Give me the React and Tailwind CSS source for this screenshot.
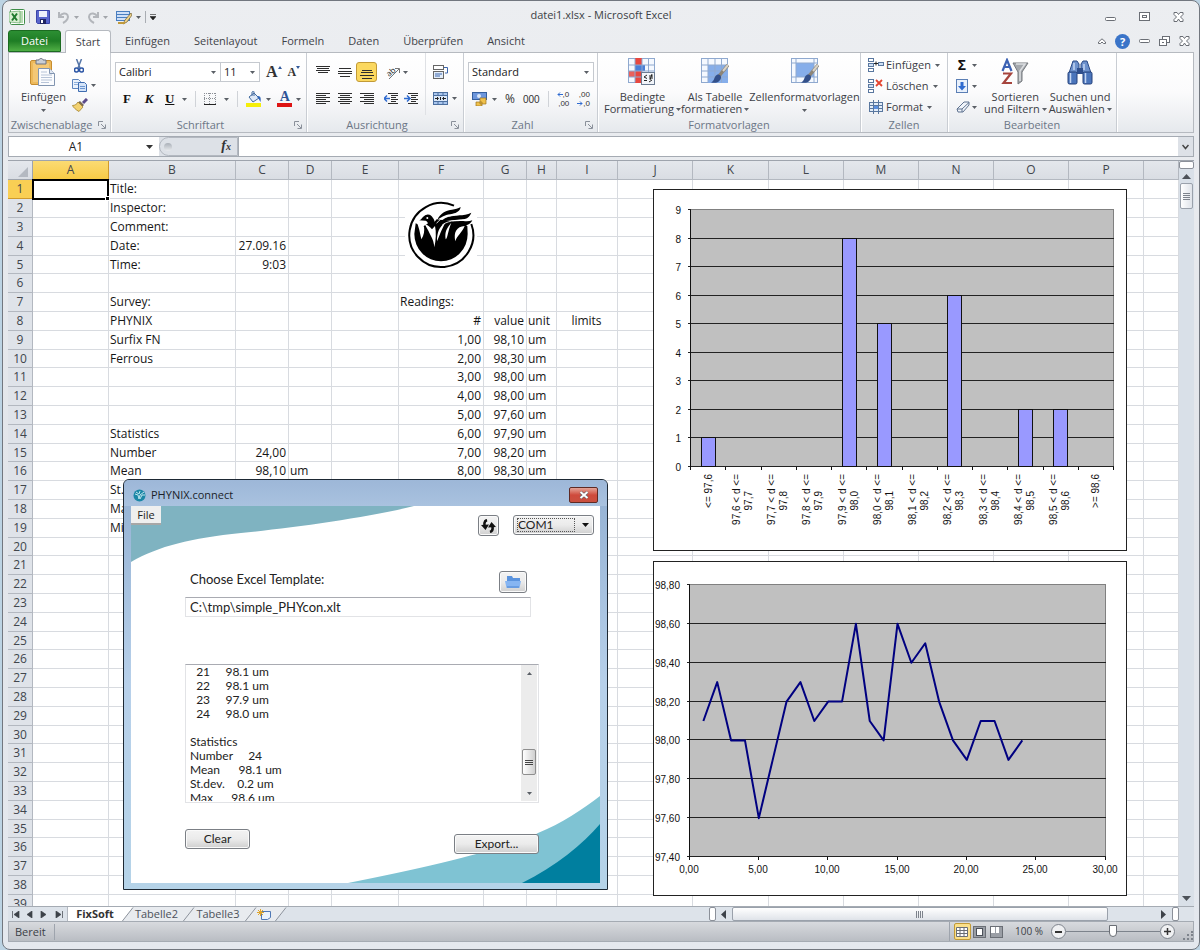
import React, { useState } from "react";

const COLUMNS = [
  { name: "A", width: "w-[76px]" },
  { name: "B", width: "w-[127px]" },
  { name: "C", width: "w-[53px]" },
  { name: "D", width: "w-[43px]" },
  { name: "E", width: "w-[67px]" },
  { name: "F", width: "w-[85px]" },
  { name: "G", width: "w-[43px]" },
  { name: "H", width: "w-[30px]" },
  { name: "I", width: "w-[61px]" },
  { name: "J", width: "w-[75px]" },
  { name: "K", width: "w-[76px]" },
  { name: "L", width: "w-[75px]" },
  { name: "M", width: "w-[75px]" },
  { name: "N", width: "w-[75px]" },
  { name: "O", width: "w-[75px]" },
  { name: "P", width: "w-[75px]" },
  { name: "", width: "" },
];

const CELLS = {
  B1: "Title:",
  B2: "Inspector:",
  B3: "Comment:",
  B4: "Date:",
  C4: "27.09.16",
  B5: "Time:",
  C5: "9:03",
  B7: "Survey:",
  F7: "Readings:",
  B8: "PHYNIX",
  F8: "#",
  G8: "value",
  H8: "unit",
  I8: "limits",
  B9: "Surfix FN",
  B10: "Ferrous",
  B14: "Statistics",
  B15: "Number",
  C15: "24,00",
  B16: "Mean",
  C16: "98,10",
  D16: "um",
  B17: "St.dev.",
  B18: "Max",
  B19: "Min",
};

const READINGS = [
  98.1, 98.3, 98.0, 98.0, 97.6, 97.9, 98.2, 98.3, 98.1, 98.2, 98.2, 98.6,
  98.1, 98.0, 98.6, 98.4, 98.5, 98.2, 98.0, 97.9, 98.1, 98.1, 97.9, 98.0,
];

const comma = (n) => n.toFixed(2).replace(".", ",");

READINGS.slice(0, 8).forEach((value, i) => {
  CELLS[`F${i + 9}`] = comma(i + 1);
  CELLS[`G${i + 9}`] = comma(value);
  CELLS[`H${i + 9}`] = "um";
});

const HISTOGRAM = [
  { label: ["<= 97,6"], count: 1 },
  { label: ["97,6 < d <=", "97,7"], count: 0 },
  { label: ["97,7 < d <=", "97,8"], count: 0 },
  { label: ["97,8 < d <=", "97,9"], count: 0 },
  { label: ["97,9 < d <=", "98,0"], count: 8 },
  { label: ["98,0 < d <=", "98,1"], count: 5 },
  { label: ["98,1 < d <=", "98,2"], count: 0 },
  { label: ["98,2 < d <=", "98,3"], count: 6 },
  { label: ["98,3 < d <=", "98,4"], count: 0 },
  { label: ["98,4 < d <=", "98,5"], count: 2 },
  { label: ["98,5 < d <=", "98,6"], count: 2 },
  { label: [">= 98,6"], count: 0 },
];

const LOG = [
  "  21     98.1 um",
  "  22     98.1 um",
  "  23     97.9 um",
  "  24     98.0 um",
  "",
  "Statistics",
  "Number     24",
  "Mean      98.1 um",
  "St.dev.    0.2 um",
  "Max      98.6 um",
].join("\n");

/* ---------- small helpers ---------- */

function Caret({ className = "" }) {
  return (
    <svg className={`h-[3px] w-[5px] shrink-0 ${className}`} viewBox="0 0 5 3">
      <path d="M0 0h5L2.5 3z" fill="#5a5f66" />
    </svg>
  );
}

function Svg({ w, h, children, className = "" }) {
  return (
    <svg width={w} height={h} viewBox={`0 0 ${w} ${h}`} className={`shrink-0 ${className}`} fill="none">
      {children}
    </svg>
  );
}

function IconButton({ label, children, className = "" }) {
  return (
    <button aria-label={label} title={label} className={`flex shrink-0 items-center justify-center gap-1 ${className}`}>
      {children}
    </button>
  );
}

function Combo({ label, value, className }) {
  return (
    <span className={`relative flex h-5 items-center border border-[#c5c9cf] bg-white ${className}`}>
      <select aria-label={label} className="h-full w-full appearance-none bg-transparent pl-[3px] text-[11px] text-[#222] outline-none">
        <option>{value}</option>
      </select>
      <Caret className="pointer-events-none absolute right-1" />
    </span>
  );
}

function Group({ title, className = "", launcher, children }) {
  return (
    <section className={`flex shrink-0 flex-col border-r border-[#c9cdd3] shadow-[1px_0_0_#fff] ${className}`}>
      <div className="flex-1">{children}</div>
      <div className={`relative flex h-[15px] items-center justify-center text-[11px] leading-[15px] text-[#6c7686] ${launcher ? "pr-4" : ""}`}>
        {title}
        {launcher && (
          <button aria-label={`${title} Optionen`} className="absolute right-1 top-1">
            <Svg w={8} h={8}>
              <path d="M.5 5V.5H5M3 3l4 4M7.5 3.5v4h-4" stroke="#8a909a" />
            </Svg>
          </button>
        )}
      </div>
    </section>
  );
}

/* ---------- icons ---------- */

const ExcelIcon = () => (
  <Svg w={16} h={16}>
    <rect x="1.5" y=".5" width="14" height="15" rx="1" fill="#fff" stroke="#3f8d48" />
    <rect x="10" y="2" width="4" height="12" fill="#b9dcb4" />
    <path d="M0 3l11-1v12L0 13z" fill="#d9efd2" stroke="#4f9a55" strokeWidth=".6" />
    <path d="M3 4.5l5 7M8 4.5l-5 7" stroke="#1f7a2e" strokeWidth="2" />
  </Svg>
);

const SaveIcon = () => (
  <Svg w={14} h={14}>
    <path d="M.5.5h13v13h-12l-1-1z" fill="#5a66cc" stroke="#3a44a8" />
    <rect x="3" y="1" width="8" height="6" fill="#eef1fb" />
    <rect x="4" y="9" width="6" height="5" fill="#1e2360" />
    <rect x="5" y="10" width="2" height="3" fill="#fff" />
  </Svg>
);

const UndoIcon = ({ flip }) => (
  <Svg w={12} h={13} className={flip ? "-scale-x-100" : ""}>
    <path d="M1 1v5h5M1.5 5.5C4 2 8 1.5 9.5 4c1.5 2.5-.5 6-4.5 8" stroke="#b3b6bb" strokeWidth="2" />
  </Svg>
);

const EditIcon = () => (
  <Svg w={16} h={15}>
    <rect x=".5" y="1.5" width="13" height="9" fill="#cfe0f8" stroke="#4a7fc0" />
    <path d="M.5 4.5h13M.5 7.5h13" stroke="#4a7fc0" />
    <path d="M15 3l-6 7-2 4 4-2 5-7z" fill="#f0d48a" stroke="#6e5a2a" strokeWidth=".7" />
    <path d="M2 13h7" stroke="#c09a3c" strokeWidth="2" />
  </Svg>
);

const PasteIcon = () => (
  <Svg w={26} h={28}>
    <rect x=".5" y="2.5" width="21" height="24" rx="1.5" fill="#edb95a" stroke="#c68d31" />
    <rect x="3" y="5" width="16" height="19" fill="#f4c876" />
    <path d="M6 2h3c0-2 4-2 4 0h3v4H6z" fill="#c9ced6" stroke="#6c7380" />
    <path d="M8.5 10.5h11l5 5v12h-16z" fill="#fbfcfe" stroke="#8295b0" />
    <path d="M19.5 10.5v5h5" fill="#dfe6f1" stroke="#8295b0" />
    <path d="M11 14h6M11 17h11M11 19.5h11M11 22h11M11 24.5h8" stroke="#b7c4d8" />
  </Svg>
);

const CutIcon = () => (
  <Svg w={10} h={14}>
    <path d="M2.5 0l3.5 9M7.5 0L4 9" stroke="#5676a8" strokeWidth="1.5" />
    <circle cx="2.5" cy="11" r="2" stroke="#2b55a5" strokeWidth="1.5" />
    <circle cx="7.5" cy="11" r="2" stroke="#2b55a5" strokeWidth="1.5" />
  </Svg>
);

const CopyIcon = () => (
  <Svg w={15} h={13}>
    <path d="M.5.5h6l2 2v7h-8z" fill="#eaf2fc" stroke="#5d84bd" />
    <path d="M2 3.5h4M2 5.5h4" stroke="#8fb0dc" />
    <path d="M6.5 3.5h6l2 2v7h-8z" fill="#d5e4f8" stroke="#3e6cb0" />
    <path d="M8 7.5h5M8 9.5h5" stroke="#6d96d0" />
  </Svg>
);

const BrushIcon = () => (
  <Svg w={16} h={14}>
    <path d="M15 1l-4 4" stroke="#5a4a8a" strokeWidth="3" />
    <path d="M8 3l4 4-2 2-5-4z" fill="#7b6a56" />
    <path d="M6 4l5 5-4 4.5C4 12 1 9 .5 7.5 3 7.5 5 6 6 4z" fill="#f3d271" stroke="#a3832c" strokeWidth=".8" />
  </Svg>
);

/* horizontal strokes given as [x1, x2, y] */
const Lines = ({ w = 14, h = 12, rows, children }) => (
  <Svg w={w} h={h}>
    {rows.map(([a, b, y], i) => (
      <path key={i} d={`M${a} ${y + 0.5}H${b}`} stroke="#2e2e2e" />
    ))}
    {children}
  </Svg>
);

const GridIcon = () => (
  <Svg w={12} h={12}>
    <path d="M.5 0v11M5.5 0v11M11.5 0v11M0 .5h12M0 5.5h12" stroke="#8b8f96" strokeDasharray="1 1" />
    <path d="M0 11.5h12" stroke="#222" />
  </Svg>
);

const FillIcon = () => (
  <Svg w={16} h={16}>
    <path d="M3 6l5-4 5 5-6 4z" fill="#dfe9f7" stroke="#426a9f" />
    <path d="M6 5V1c1-1 2-1 2 0v4" stroke="#426a9f" />
    <path d="M12 5c3 0 3 3 2.5 6C13 9 13 7 11 6z" fill="#2f64b8" />
    <rect x="0" y="12" width="15" height="4" fill="#f5ee0a" />
  </Svg>
);

const SheetIcon = ({ kind }) => (
  <Svg w={28} h={28}>
    <rect x=".5" y=".5" width="26" height="24" fill="#f5f9ff" stroke="#8fa9cf" />
    {kind === "cond" && (
      <>
        <rect x="7" y="0" width="7" height="25" fill="#e8473f" />
        <rect x="7" y="7" width="10" height="6" fill="#4a7fd8" />
        <rect x="1" y="13" width="13" height="6" fill="#e8473f" opacity=".85" />
      </>
    )}
    {kind === "table" && <rect x="7" y="7" width="20" height="18" fill="#86aeea" />}
    {kind !== "style" && <path d="M.5 7h26M.5 13h26M.5 19h26M7 .5v24M14 .5v24M20.5 .5v24" stroke="#8fa9cf" />}
    {kind === "style" && (
      <>
        <rect x="5" y="5" width="18" height="14" fill="#86aeea" />
        <path d="M.5 5h26M.5 19h26M5 .5v24M23 .5v24" stroke="#8fa9cf" />
      </>
    )}
    {kind === "cond" ? (
      <>
        <rect x="13.5" y="14.5" width="13" height="12" fill="#f2f5fa" stroke="#6c7c92" />
        <path d="M19 17l-3 2 3 1.5M16 22.5h3M21 18h4M21 20h4M24 16l-2 6M21 24l3-2" stroke="#222" />
      </>
    ) : (
      <>
        <path d="M27 7L18 18" stroke="#8d8577" strokeWidth="3.5" />
        <path d="M27 7l-5 6" stroke="#d8d3c8" strokeWidth="2" />
        <path d="M19 17c2 2 1 5-2 7-2 1-5 1-7 .5 3-1.5 3-4 4.5-6.5 1-1.5 3-2 4.5-1z" fill="#33508a" />
      </>
    )}
  </Svg>
);

const RowsIcon = ({ kind }) => (
  <Svg w={16} h={14}>
    {kind === "format" ? (
      <>
        <rect x="1.5" y="2.5" width="13" height="9" fill="#e3edf9" stroke="#59779f" />
        <path d="M1 5.5h14M1 8.5h14M5.5 0v14M10.5 0v14" stroke="#59779f" />
        <rect x="6" y="6" width="4" height="3" fill="#5a8fe0" />
      </>
    ) : (
      <>
        <rect x=".5" y=".5" width="5" height="3" fill="#fff" stroke="#59779f" />
        <rect x=".5" y="5.5" width="5" height="3" fill="#cfe0f5" stroke="#59779f" />
        <rect x=".5" y="10.5" width="5" height="3" fill="#fff" stroke="#59779f" />
        {kind === "insert" ? (
          <>
            <path d="M6 5.5h4M8 3.5v4" stroke="#222" />
            <rect x="10.5" y="4.5" width="5" height="3" fill="#cfe0f5" stroke="#59779f" />
          </>
        ) : (
          <path d="M8 1l6 6M14 1L8 7" stroke="#e4442f" strokeWidth="1.8" />
        )}
      </>
    )}
  </Svg>
);

const DownBoxIcon = () => (
  <Svg w={12} h={14}>
    <rect x=".5" y=".5" width="11" height="13" fill="#e9f1fc" stroke="#5b7fb5" />
    <path d="M4.5 3h3v4H10l-4 4.5L2 7h2.5z" fill="#2f6bd0" />
  </Svg>
);

const EraserIcon = () => (
  <Svg w={14} h={12}>
    <path d="M1 8l7-7h5v3l-6 7H2z" fill="#f0f4fa" stroke="#5f7390" />
    <path d="M1 8h5l7-6.5M6 8v3" stroke="#5f7390" />
  </Svg>
);

const SortIcon = () => (
  <Svg w={28} h={28}>
    <path d="M12 5h15l-6 9v9l-4 3V14z" fill="#a4a8ad" stroke="#74787d" />
    <path d="M15 6h9l-5 7v10" stroke="#dcdee1" strokeWidth="1.5" />
    <path d="M1.5 13L6 2l4.5 11M3 9h6" stroke="#3c62b4" strokeWidth="2.2" />
    <path d="M2 15.5h8L2.5 25H11" stroke="#a6443d" strokeWidth="2.2" />
  </Svg>
);

const BinocularsIcon = () => (
  <Svg w={26} h={25}>
    <path d="M6 1h4l2 3v9H2L5 4zM16 1h4l1 3 3 9H14V4z" fill="#6d91cc" stroke="#2b4a85" />
    <rect x="1" y="12" width="9" height="12" rx="1.5" fill="#4b75bb" stroke="#24417a" />
    <rect x="16" y="12" width="9" height="12" rx="1.5" fill="#4b75bb" stroke="#24417a" />
    <rect x="10" y="8" width="6" height="6" fill="#2f4f8d" />
    <path d="M3.5 13v10M18.5 13v10M7 3v7M17 4v6" stroke="#c4d6f2" strokeWidth="1.5" />
  </Svg>
);

const DecimalArrow = ({ flip }) => (
  <Svg w={6} h={5} className={flip ? "-scale-x-100" : ""}>
    <path d="M6 2.5H1M3 .5l-2 2 2 2" stroke="#2f6bd0" />
  </Svg>
);

function PhoenixLogo() {
  return (
    <svg className="h-[70px] w-[72px]" viewBox="75 120 216 210">
      <rect x="75" y="120" width="216" height="210" fill="#fff" />
      <path d="M222 137A96 96 0 1 0 274 192" fill="none" stroke="#000" strokeWidth="6" />
      <path d="M107 190L103 222A80 82 0 0 0 263 222L262 198C252 190 236 182 220 184L170 178 160 190 150 186 128 200z" />
      {/* head and wings */}
      <path d="M117 181c10-3 12-16 24-17 10-1 13 3 18 10 6 8 8 22 4 40l-14-16c-6-10-8-15-12-16z" />
      <path d="M172 180c8-22 30-30 44-31 10-1 18-4 26-8-2 12-12 18-24 20-20 3-30 6-46 19z" />
      <path d="M182 186c14-18 36-18 54-20 14-1 26-2 38-8-6 16-18 20-32 21-26 1-40 2-60 7z" />
      <path d="M204 208c6-22 30-26 46-25 10 1 18 1 27-2-6 14-20 15-32 18-18 4-28 12-36 26z" />
      <path d="M170 190C182 172 206 168 238 164M186 196C198 184 226 180 256 179" fill="none" stroke="#fff" strokeWidth="2.5" />
      {/* white flames */}
      <g fill="#fff">
        <path d="M112 190l6 20 6 28c8-12 10-26 8-38l-10-10z" />
        <path d="M134 192c8 14 14 26 20 38 5 10 8 20 9 32 5-22 6-46 2-64l-9 10c-6-8-14-14-22-16z" />
        <path d="M196 188c-18 12-25 28-25 56 8-18 12-32 25-56z" />
        <path d="M214 188c-16 18-20 30-17 50 6-4 7-26 17-50z" />
        <path d="M254 198c-24 2-34 18-28 46 6-20 18-22 28-46z" />
      </g>
      <circle cx="142" cy="174" r="3" fill="#fff" />
    </svg>
  );
}

/* ---------- charts ---------- */

function HistogramChart() {
  const left = 37, top = 20, width = 423, height = 257;
  const step = width / HISTOGRAM.length;
  const y = (n) => Math.round(top + height - (n * height) / 9) - 0.5;
  return (
    <svg
      width="474"
      height="362"
      viewBox="0 0 472 360"
      className="border border-[#222] bg-white"
      fontFamily="'Liberation Sans', Arial, sans-serif"
      fontSize="10"
      role="img"
      aria-label="Histogram"
    >
      <rect x={left - 0.5} y={top - 0.5} width={width} height={height} fill="#c0c0c0" stroke="#808080" />
      {[0, 1, 2, 3, 4, 5, 6, 7, 8, 9].map((n) => (
        <g key={n}>
          <path d={`M${left - 3} ${y(n)}H${n === 9 ? left : left + width}`} stroke="#222" />
          <text x={27} y={y(n) + 4.5} textAnchor="end" fill="#111">{n}</text>
        </g>
      ))}
      <path d={`M${left - 0.5} ${top}V${top + height + 3}`} stroke="#111" />
      {HISTOGRAM.map(({ label, count }, i) => {
        const mid = Math.round(left + step * (i + 0.5));
        return (
          <g key={i}>
            <path d={`M${Math.round(left + step * (i + 1)) - 0.5} ${top + height}v3`} stroke="#111" />
            {count > 0 && (
              <rect x={mid - 8 + 0.5} y={y(count)} width="14" height={y(0) - y(count)} fill="#9999ff" stroke="#111" />
            )}
            {label.map((line, k) => (
              <text
                key={k}
                textAnchor="end"
                fill="#111"
                transform={`translate(${mid + 3 + (label.length === 1 ? 0 : k === 0 ? -7 : 5)} ${k === 0 ? 284 : 301}) rotate(-90)`}
              >
                {line}
              </text>
            ))}
          </g>
        );
      })}
    </svg>
  );
}

function ReadingsChart() {
  const left = 36, top = 23, width = 416, height = 272;
  const x = (n) => left + (n * width) / 30 - 0.5;
  const y = (v) => top + ((98.8 - v) * height) / 1.4;
  const points = READINGS.map((v, i) => `${x(i + 1)},${y(v)}`).join(" ");
  return (
    <svg
      width="474"
      height="335"
      viewBox="0 0 472 333"
      className="border border-[#222] bg-white"
      fontFamily="'Liberation Sans', Arial, sans-serif"
      fontSize="10"
      role="img"
      aria-label="Readings"
    >
      <rect x={left - 0.5} y={top - 0.5} width={width} height={height} fill="#c0c0c0" stroke="#808080" />
      {[98.8, 98.6, 98.4, 98.2, 98.0, 97.8, 97.6, 97.4].map((v, i) => (
        <g key={v}>
          <path d={`M${left - 3} ${Math.round(y(v)) - 0.5}H${i === 0 ? left : left + width}`} stroke="#222" />
          <text x={26} y={Math.round(y(v)) + 4} textAnchor="end" fill="#111">{comma(v)}</text>
        </g>
      ))}
      <path d={`M${left - 0.5} ${top}v${height}`} stroke="#111" />
      {[0, 5, 10, 15, 20, 25, 30].map((n) => (
        <g key={n}>
          <path d={`M${Math.round(x(n)) - 0.5} ${top + height}v3`} stroke="#111" />
          <text x={Math.round(x(n)) - 1} y={311} textAnchor="middle" fill="#111">{comma(n)}</text>
        </g>
      ))}
      <polyline points={points} fill="none" stroke="#000080" strokeWidth="2" strokeLinejoin="round" />
    </svg>
  );
}

/* ---------- window parts ---------- */

function CrossIcon() {
  return (
    <Svg w={11} h={10}>
      <path d="M1 .5h3l1.5 2L7 .5h3v2L7.5 5 10 7.5v2H7L5.5 7 4 9.5H1v-2L3.5 5 1 2.5z" fill="#fff" stroke="#6a6e75" />
    </Svg>
  );
}

function TitleBar() {
  return (
    <header className="relative flex h-7 shrink-0 items-center pt-0.5">
      <div className="flex items-center gap-1 pl-px">
        <ExcelIcon />
        <span className="mr-0.5 h-3 w-px bg-[#a9adb3]" />
        <IconButton label="Speichern"><SaveIcon /></IconButton>
        <IconButton label="Rückgängig" className="ml-1"><UndoIcon /><Caret className="opacity-50" /></IconButton>
        <IconButton label="Wiederholen" className="ml-1"><UndoIcon flip /><Caret className="opacity-50" /></IconButton>
        <IconButton label="Bearbeiten" className="ml-1"><EditIcon /><Caret /></IconButton>
        <span className="h-3 w-px bg-[#a9adb3]" />
        <IconButton label="Symbolleiste anpassen">
          <Svg w={6} h={6}><path d="M0 .5h6M0 2.5h6L3 6z" stroke="#222" strokeWidth=".6" fill="#222" /></Svg>
        </IconButton>
      </div>
      <h1 className="pointer-events-none absolute inset-x-0 top-[5px] text-center text-[11px] leading-4 text-[#3b3f45]">
        datei1.xlsx - Microsoft Excel
      </h1>
      <div className="ml-auto flex items-center gap-[23px] pr-2.5">
        <IconButton label="Minimieren"><Svg w={11} h={10}><rect x=".5" y="5.5" width="10" height="3" rx="1" fill="#fff" stroke="#6a6e75" /></Svg></IconButton>
        <IconButton label="Maximieren"><Svg w={11} h={10}><rect x=".5" y=".5" width="10" height="8" fill="#fff" stroke="#6a6e75" /><rect x="3.5" y="3.5" width="4" height="2" stroke="#6a6e75" /></Svg></IconButton>
        <IconButton label="Schließen"><CrossIcon /></IconButton>
      </div>
    </header>
  );
}

function Tabs() {
  const tabs = ["Einfügen", "Seitenlayout", "Formeln", "Daten", "Überprüfen", "Ansicht"];
  return (
    <nav className="flex h-[22px] shrink-0 items-stretch text-[11px] text-[#3f4349]">
      <button className="w-[53px] rounded-t-[3px] border border-[#1c6b21] bg-linear-to-b from-[#2c8f33] via-[#1e7d25] to-[#4faf45] text-white">
        Datei
      </button>
      <button className="relative z-10 -mb-px ml-1 w-[46px] rounded-t-[3px] border border-b-0 border-[#b6bac0] bg-white">Start</button>
      <div className="ml-0.5 flex">
        {tabs.map((tab) => (
          <button key={tab} className="px-3">{tab}</button>
        ))}
      </div>
      <div className="ml-auto flex items-center gap-[9px] pr-1">
        <IconButton label="Menüband minimieren"><Svg w={8} h={6}><path d="M.5 4L4 .8 7.5 4v1.500h-2L4 4 2.500 5.500h-2z" fill="#fff" stroke="#6a6e75" /></Svg></IconButton>
        <button aria-label="Hilfe" className="h-[15px] w-[15px] rounded-full bg-[#3a74c8] text-[11px] font-bold leading-[15px] text-white">?</button>
        <IconButton label="Fenster minimieren"><Svg w={11} h={4}><rect x=".5" y=".5" width="10" height="3" rx="1" fill="#fff" stroke="#6a6e75" /></Svg></IconButton>
        <IconButton label="Fenster wiederherstellen"><Svg w={11} h={10}><rect x="3.5" y=".5" width="7" height="6" fill="#fff" stroke="#6a6e75" /><rect x=".5" y="3.5" width="7" height="6" fill="#fff" stroke="#6a6e75" /><rect x="3" y="6" width="2" height="1" fill="#6a6e75" /></Svg></IconButton>
        <IconButton label="Fenster schließen"><CrossIcon /></IconButton>
      </div>
    </nav>
  );
}

function BigButton({ icon, lines, className = "" }) {
  return (
    <button className={`flex shrink-0 flex-col items-center text-[11px] leading-3 text-[#3c4046] ${className}`}>
      <span className="mb-1 flex h-[30px] items-center">{icon}</span>
      {lines.map((line, i) => (
        <span key={line} className="flex h-3 items-center gap-0.5 whitespace-nowrap">
          {line}
          {i === lines.length - 1 && lines.length > 1 && <Caret />}
        </span>
      ))}
      {lines.length === 1 && <Caret className="mt-1.5" />}
    </button>
  );
}

function Ribbon() {
  return (
    <div className="flex h-[81px] shrink-0 overflow-hidden border border-[#b6bac0] bg-linear-to-b from-white via-[#fbfbfc] to-[#e6e9ed]">
      <Group title="Zwischenablage" launcher className="w-[102px]">
        <div className="flex gap-1.5 pl-3 pt-1">
          <BigButton icon={<PasteIcon />} lines={["Einfügen"]} />
          <div className="flex flex-col items-start gap-1.5 pt-0.5">
            <IconButton label="Ausschneiden" className="ml-0.5"><CutIcon /></IconButton>
            <IconButton label="Kopieren"><CopyIcon /><Caret /></IconButton>
            <IconButton label="Format übertragen"><BrushIcon /></IconButton>
          </div>
        </div>
      </Group>

      <Group title="Schriftart" launcher className="w-[196px]">
        <div className="flex items-center px-1 pt-[9px]">
          <Combo label="Schriftart" value="Calibri" className="w-[106px]" />
          <Combo label="Schriftgrad" value="11" className="-ml-px w-10" />
          <button aria-label="Schrift vergrößern" className="ml-1.5 flex font-['Liberation_Serif',serif] text-base font-bold leading-5 text-[#333]">
            A<Svg w={4} h={3} className="mt-1"><path d="M0 3h4L2 0z" fill="#335a9a" /></Svg>
          </button>
          <button aria-label="Schrift verkleinern" className="ml-1.5 flex font-['Liberation_Serif',serif] text-xs font-bold leading-5 text-[#333]">
            A<Svg w={4} h={3} className="mt-1"><path d="M0 0h4L2 3z" fill="#335a9a" /></Svg>
          </button>
        </div>
        <div className="mt-[7px] flex h-5 items-center pl-2.5 font-['Liberation_Serif',serif] text-[13px] font-bold text-[#111]">
          <button className="w-3">F</button>
          <button className="ml-2.5 w-3 italic">K</button>
          <button className="ml-2.5 flex items-center gap-2"><u>U</u><Caret /></button>
          <span className="mx-2 h-4 w-px bg-[#d0d3d8]" />
          <IconButton label="Rahmen"><GridIcon /><Caret className="ml-1" /></IconButton>
          <span className="mx-2 h-4 w-px bg-[#d0d3d8]" />
          <IconButton label="Füllfarbe"><FillIcon /><Caret /></IconButton>
          <button aria-label="Schriftfarbe" className="ml-1.5 flex items-center gap-1">
            <span className="w-[15px] border-b-4 border-[#dd1414] text-sm leading-3 text-[#2f5496]">A</span>
            <Caret />
          </button>
        </div>
      </Group>

      <Group title="Ausrichtung" launcher className="w-[157px]">
        <div className="flex h-[62px]">
          <div className="w-[119px] border-r border-[#dfe1e5] pl-[9px]">
            <div className="mt-[9px] flex h-5 items-center gap-2">
              <IconButton label="Oben"><Lines h={14} rows={[[0, 14, 1], [1, 13, 3], [0, 14, 5], [2, 12, 7]]} /></IconButton>
              <IconButton label="Mitte"><Lines h={14} rows={[[1, 13, 3], [0, 14, 6], [0, 14, 8], [2, 12, 11]]} /></IconButton>
              <IconButton label="Unten" className="-mx-1 h-5 w-[21px] rounded-[3px] border border-[#c29a36] bg-[#fbd85f]">
                <Lines h={16} rows={[[2, 12, 6], [1, 13, 8], [0, 14, 11], [2, 12, 14]]} />
              </IconButton>
              <IconButton label="Ausrichtung" className="ml-1">
                <Svg w={16} h={18}>
                  <path d="M4 16L14 6M10 5.5h4.5V10" stroke="#777" />
                  <text x="4" y="14" fontSize="8" fill="#222" transform="rotate(-40 4 14)">ab</text>
                </Svg>
                <Caret className="-ml-0.5" />
              </IconButton>
            </div>
            <div className="mt-[7px] flex h-5 items-center gap-2">
              <IconButton label="Links"><Lines rows={[[0, 14, 0], [0, 10, 2], [0, 14, 4], [0, 10, 6], [0, 14, 8], [0, 10, 10]]} /></IconButton>
              <IconButton label="Zentriert"><Lines rows={[[0, 14, 0], [2, 12, 2], [0, 14, 4], [2, 12, 6], [0, 14, 8], [2, 12, 10]]} /></IconButton>
              <IconButton label="Rechts"><Lines rows={[[0, 14, 0], [4, 14, 2], [0, 14, 4], [4, 14, 6], [0, 14, 8], [4, 14, 10]]} /></IconButton>
              <IconButton label="Einzug verkleinern" className="ml-0.5">
                <Lines rows={[[4, 14, 0], [7, 14, 2], [7, 12, 4], [7, 14, 6], [7, 12, 8], [4, 14, 10]]}><path d="M0 5.5h6M3 2.5l-3 3 3 3" stroke="#2f6bd0" strokeWidth="1.5" /></Lines>
              </IconButton>
              <IconButton label="Einzug vergrößern" className="-ml-0.5">
                <Lines rows={[[4, 14, 0], [7, 14, 2], [7, 12, 4], [7, 14, 6], [7, 12, 8], [4, 14, 10]]}><path d="M0 5.5h6M3 2.5l3 3-3 3" stroke="#2f6bd0" strokeWidth="1.5" /></Lines>
              </IconButton>
            </div>
          </div>
          <div className="flex flex-col items-start gap-[13px] pl-[7px] pt-[12px]">
            <IconButton label="Zeilenumbruch">
              <Svg w={16} h={14}><rect x=".5" y=".5" width="10" height="4" fill="#fff" stroke="#666" /><rect x=".5" y="6.5" width="10" height="7" fill="#e3edf9" stroke="#666" /><path d="M2 9h7M2 11h5M11 2.5h3.5V8H12" stroke="#3c66ad" /></Svg>
            </IconButton>
            <IconButton label="Verbinden und zentrieren">
              <Svg w={15} h={13}>
                <rect x=".5" y=".5" width="14" height="12" fill="#a9c6ee" stroke="#4c6f9f" />
                <path d="M1 3.5h13M1 9.5h13M5 1v2M10 1v2M5 10v2M10 10v2" stroke="#4c6f9f" />
                <rect x="1" y="4" width="13" height="5" fill="#dce9fa" />
                <path d="M2 6.5h3M10 6.5h3M7.5 5v3M4 5l1.5 1.5L4 8M11 5L9.5 6.5 11 8" stroke="#222" />
              </Svg>
              <Caret />
            </IconButton>
          </div>
        </div>
      </Group>

      <Group title="Zahl" launcher className="w-[134px]">
        <div className="pl-1 pt-[9px]">
          <Combo label="Zahlenformat" value="Standard" className="w-[126px]" />
          <div className="mt-[7px] flex h-5 items-center pl-1 text-[11px] text-[#333]">
            <IconButton label="Währung">
              <Svg w={16} h={14}><rect x=".5" y=".5" width="14" height="7" fill="#6d96dc" stroke="#355f9e" /><circle cx="7" cy="4" r="2" fill="#dbe8f8" /><path d="M8 6h6v6H8zM4 10h6v4H4z" fill="#f0c14a" stroke="#9b7420" strokeWidth=".7" /></Svg>
              <Caret />
            </IconButton>
            <button className="ml-2 text-xs">%</button>
            <button className="ml-2 font-['Liberation_Sans',Arial,sans-serif] text-[10px]">000</button>
            <span className="mx-2 h-4 w-px bg-[#d0d3d8]" />
            <button aria-label="Dezimalstelle hinzufügen" className="grid justify-items-end font-['Liberation_Sans',Arial,sans-serif] text-[8px] leading-[9px]">
              <span className="flex items-center"><DecimalArrow />,0</span>
              <span>,00</span>
            </button>
            <button aria-label="Dezimalstelle entfernen" className="ml-2 grid justify-items-end font-['Liberation_Sans',Arial,sans-serif] text-[8px] leading-[9px]">
              <span>,00</span>
              <span className="flex items-center"><DecimalArrow flip />,0</span>
            </button>
          </div>
        </div>
      </Group>

      <Group title="Formatvorlagen" className="w-[263px]">
        <div className="flex justify-between pl-1.5 pr-px pt-1">
          <BigButton icon={<SheetIcon kind="cond" />} lines={["Bedingte", "Formatierung"]} />
          <BigButton icon={<SheetIcon kind="table" />} lines={["Als Tabelle", "formatieren"]} />
          <BigButton icon={<SheetIcon kind="style" />} lines={["Zellenformatvorlagen"]} />
        </div>
      </Group>

      <Group title="Zellen" className="w-[87px]">
        <div className="flex flex-col gap-px pl-[7px] pt-0.5 text-[11px] text-[#3c4046]">
          {[["insert", "Einfügen"], ["delete", "Löschen"], ["format", "Format"]].map(([kind, text]) => (
            <button key={kind} className="flex h-5 items-center gap-0.5">
              <RowsIcon kind={kind} />
              {text}
              <Caret className="ml-0.5" />
            </button>
          ))}
        </div>
      </Group>

      <Group title="Bearbeiten" className="w-[169px]">
        <div className="flex">
          <div className="flex w-9 flex-col items-start gap-px pl-2 pt-0.5">
            <IconButton label="Summe" className="h-5"><span className="w-3 text-sm font-bold text-[#111]">Σ</span><Caret /></IconButton>
            <IconButton label="Füllbereich" className="h-5"><DownBoxIcon /><Caret /></IconButton>
            <IconButton label="Löschen" className="h-5"><EraserIcon /><Caret className="-ml-0.5" /></IconButton>
          </div>
          <div className="flex gap-0.5 pt-1">
            <BigButton icon={<SortIcon />} lines={["Sortieren", "und Filtern"]} />
            <BigButton icon={<BinocularsIcon />} lines={["Suchen und", "Auswählen"]} />
          </div>
        </div>
      </Group>
    </div>
  );
}

function FormulaBar() {
  return (
    <div className="mt-[3px] flex h-[21px] shrink-0 border border-[#a5abb3] bg-[#dde1e7]">
      <label className="relative flex w-[150px] shrink-0 items-center bg-white">
        <input aria-label="Namenfeld" defaultValue="A1" className="w-full bg-transparent pr-4 text-center text-xs text-[#222] outline-none" />
        <Svg w={7} h={4} className="absolute right-1.5"><path d="M0 0h7L3.5 4z" fill="#333" /></Svg>
      </label>
      <div className="flex w-[79px] shrink-0 items-center justify-between rounded-l-full border border-[#b3b8c0] bg-[#dde1e7] px-1">
        <span className="h-2 w-2 rounded-full bg-linear-to-b from-[#aab0b8] to-[#e9ebee]" />
        <button className="pr-0.5 font-['Liberation_Serif',serif] text-sm font-bold italic leading-4 text-[#333]">
          f<span className="text-[10px]">x</span>
        </button>
      </div>
      <input aria-label="Bearbeitungsleiste" className="min-w-0 flex-1 border-l border-[#a5abb3] bg-white px-1 text-xs outline-none" />
      <button aria-label="Bearbeitungsleiste erweitern" className="flex w-[15px] items-center justify-center">
        <Svg w={7} h={6}><path d="M.5 1l3 3.5 3-3.5" stroke="#444" strokeWidth="1.5" /></Svg>
      </button>
    </div>
  );
}

function cellAlign(col, text) {
  if (col === "I") return "text-center";
  if (col === "F" && text !== "Readings:") return "text-right";
  if (col === "C" || col === "G") return "text-right";
  return "text-left";
}

function Sheet() {
  const rows = Array.from({ length: 39 }, (_, i) => i + 1);
  return (
    <main className="relative min-w-0 flex-1 overflow-hidden bg-white">
      <table className="w-full table-fixed border-separate border-spacing-0 text-xs leading-4 text-[#161616]">
        <thead>
          <tr className="h-[19px] bg-linear-to-b from-[#e4e7ec] to-[#d9dde3] text-[#41464d]">
            <th className="w-[25px] border-b border-r border-[#9ea4ad] p-0 align-bottom">
              <Svg w={24} h={17}><path d="M20 5v10H10z" fill="#b4b9c1" /></Svg>
            </th>
            {COLUMNS.map(({ name, width }) => (
              <th
                key={name}
                scope="col"
                className={`${width} border-b border-r p-0 font-normal ${
                  name === "A"
                    ? "border-[#d09a2c] bg-linear-to-b from-[#fbdb72] to-[#f8cb45]"
                    : "border-[#b3b8c0]"
                }`}
              >
                {name}
              </th>
            ))}
          </tr>
        </thead>
        <tbody>
          {rows.map((row) => (
            <tr key={row} className={row % 5 === 0 ? "h-[18px]" : "h-[19px]"}>
              <th
                scope="row"
                className={`border-b border-r p-0 text-center text-xs leading-4 font-normal text-[#41464d] ${
                  row === 1 ? "border-[#d09a2c] bg-[#f9cf54]" : "border-[#b3b8c0] bg-[#dfe3e9]"
                }`}
              >
                {row}
              </th>
              {COLUMNS.map(({ name }) => {
                const text = CELLS[name + row] || "";
                return (
                  <td key={name} className={`overflow-hidden whitespace-nowrap border-b border-r border-[#d8dbe0] py-0 pl-px pr-0.5 leading-4 ${cellAlign(name, text)}`}>
                    {text}
                  </td>
                );
              })}
            </tr>
          ))}
        </tbody>
      </table>

      {/* objects floating on the sheet */}
      <div className="absolute left-6 top-[18px] h-[21px] w-[77px] border-2 border-black">
        <span className="absolute -bottom-[3px] -right-[3px] h-[5px] w-[5px] border border-white bg-black" />
      </div>
      <div className="absolute left-[397px] top-[39px]">
        <PhoenixLogo />
      </div>
      <div className="absolute left-[645px] top-[28px]">
        <HistogramChart />
      </div>
      <div className="absolute left-[645px] top-[400px]">
        <ReadingsChart />
      </div>
    </main>
  );
}

function VerticalScroll() {
  return (
    <div className="flex w-[15px] shrink-0 flex-col items-center bg-[#d9e0e8]">
      <span className="h-2 w-full rounded-xs border border-[#8b9099] bg-white" />
      <button aria-label="Nach oben" className="flex h-3.5 items-center"><Svg w={9} h={5}><path d="M0 5h9L4.5 0z" fill="#4d5259" /></Svg></button>
      <button aria-label="Bildlauf" className="flex h-[26px] w-[13px] flex-col items-center justify-center gap-px rounded-xs border border-[#9aa1ab] bg-linear-to-r from-white to-[#dfe3e9]">
        <span className="h-px w-[7px] bg-[#7d838c]" />
        <span className="h-px w-[7px] bg-[#7d838c]" />
        <span className="h-px w-[7px] bg-[#7d838c]" />
        <span className="h-px w-[7px] bg-[#7d838c]" />
      </button>
      <button aria-label="Nach unten" className="mt-auto flex h-4 items-center"><Svg w={9} h={5}><path d="M0 0h9L4.5 5z" fill="#4d5259" /></Svg></button>
    </div>
  );
}

/* slanted edge between two sheet tabs */
function Slant({ left = "#e8ebef", right = "#e8ebef" }) {
  return (
    <Svg w={12} h={15}>
      <path d="M0 0h11L0 15z" fill={left} />
      <path d="M0 15L11 0h1v15z" fill={right} />
      <path d="M0 14.5L11 .5" stroke="#8d939c" />
    </Svg>
  );
}

function SheetTabs() {
  const nav = [
    { label: "Erstes Blatt", d: "M1.5 0v7M8 0L3 3.5 8 7z" },
    { label: "Vorheriges Blatt", d: "M6 0L1 3.5 6 7z" },
    { label: "Nächstes Blatt", d: "M1 0l5 3.5L1 7z" },
    { label: "Letztes Blatt", d: "M1 0l5 3.5L1 7zM7.5 0v7" },
  ];
  return (
    <div className="flex h-[15px] shrink-0 border-t border-[#a5abb3] bg-[#dde3ea]">
      <div className="flex w-[60px] items-center justify-around border-r border-[#b3b8c0]">
        {nav.map(({ label, d }) => (
          <button key={label} aria-label={label}>
            <Svg w={9} h={7}><path d={d} fill="#3d4249" stroke="#3d4249" strokeWidth=".7" /></Svg>
          </button>
        ))}
      </div>
      <button className="w-[54px] bg-white text-center text-[11px] font-bold leading-[14px] text-[#333]">FixSoft</button>
      <Slant left="#ffffff" />
      <button className="w-[49px] bg-[#e8ebef] pr-1 text-[11px] leading-[14px] text-[#4c515a]">Tabelle2</button>
      <Slant />
      <button className="w-[50px] bg-[#e8ebef] pr-1 text-[11px] leading-[14px] text-[#4c515a]">Tabelle3</button>
      <Slant />
      <button aria-label="Tabellenblatt einfügen" className="flex w-[18px] items-center bg-[#e8ebef]">
        <Svg w={14} h={11}><path d="M4.5 2.5h9v6l-3 2h-6z" fill="#eaf2fc" stroke="#4f78b5" /><path d="M0 3.5h7M3.5 0v7M1 1l5 5M6 1L1 6" stroke="#e0a52a" /></Svg>
      </button>
      <Slant right="#dde3ea" />

      <div className="ml-auto flex w-2/5 items-stretch pl-1">
        <span className="w-[7px] rounded-xs border border-[#8b9099] bg-white" />
        <button aria-label="Nach links" className="flex w-4 items-center justify-center"><Svg w={5} h={9}><path d="M5 0v9L0 4.5z" fill="#3d4249" /></Svg></button>
        <button aria-label="Bildlauf" className="flex w-4/5 items-center justify-center gap-px rounded-xs border border-[#9aa1ab] bg-linear-to-b from-white to-[#dfe3e9]">
          <span className="h-[7px] w-px bg-[#7d838c]" />
          <span className="h-[7px] w-px bg-[#7d838c]" />
          <span className="h-[7px] w-px bg-[#7d838c]" />
          <span className="h-[7px] w-px bg-[#7d838c]" />
        </button>
        <button aria-label="Nach rechts" className="ml-auto mr-1.5 flex items-center"><Svg w={5} h={9}><path d="M0 0v9l5-4.5z" fill="#3d4249" /></Svg></button>
        <span className="w-[7px] rounded-xs border border-[#8b9099] bg-white" />
      </div>
      <span className="w-[15px] shrink-0" />
    </div>
  );
}

function StatusBar() {
  return (
    <footer className="flex h-[21px] shrink-0 items-center border border-[#a5abb3] bg-linear-to-b from-[#d8dade] to-[#b9bdc3] text-[11px] text-[#3c4046]">
      <span className="border-r border-[#9ea4ad] pl-1.5 pr-2 leading-4">Bereit</span>
      <div className="ml-auto flex h-full items-center border-l border-[#9ea4ad] pl-1">
        <IconButton label="Normal" className="h-[17px] w-[17px] rounded-[2px] border border-[#c29a36] bg-[#fbe08a]">
          <Svg w={12} h={10}><path d="M.5.5h11v9H.5zM0 3.5h12M0 6.5h12M4 0v10M8 0v10" stroke="#6a6e75" fill="#fff" /></Svg>
        </IconButton>
        <IconButton label="Seitenlayout" className="ml-0.5"><Svg w={13} h={12}><rect x=".5" y=".5" width="12" height="11" fill="#9a9ea5" stroke="#6a6e75" /><rect x="3.5" y="2.5" width="6" height="7" fill="#fff" stroke="#4c515a" /></Svg></IconButton>
        <IconButton label="Umbruchvorschau" className="ml-1"><Svg w={13} h={12}><rect x=".5" y=".5" width="12" height="11" fill="#9a9ea5" stroke="#6a6e75" /><path d="M1 1h4v6H1zM6 1h3v6H6z" fill="#fff" /></Svg></IconButton>
        <button className="ml-3 whitespace-nowrap text-[10px]">100 %</button>
        <button aria-label="Verkleinern" className="ml-2 flex h-[15px] w-[15px] items-center justify-center rounded-full border border-[#7d838c] bg-[#f0f1f3]"><Svg w={7} h={2}><path d="M0 1h7" stroke="#333" strokeWidth="2" /></Svg></button>
        <input
          type="range"
          aria-label="Zoom"
          defaultValue="50"
          className="h-4 w-[94px] appearance-none bg-transparent [&::-webkit-slider-runnable-track]:h-px [&::-webkit-slider-runnable-track]:bg-[#7d838c] [&::-webkit-slider-thumb]:-mt-[6px] [&::-webkit-slider-thumb]:h-3 [&::-webkit-slider-thumb]:w-2 [&::-webkit-slider-thumb]:appearance-none [&::-webkit-slider-thumb]:rounded-b-[4px] [&::-webkit-slider-thumb]:border [&::-webkit-slider-thumb]:border-[#6a6e75] [&::-webkit-slider-thumb]:bg-white"
        />
        <button aria-label="Vergrößern" className="flex h-[15px] w-[15px] items-center justify-center rounded-full border border-[#7d838c] bg-[#f0f1f3]"><Svg w={7} h={7}><path d="M0 3.5h7M3.5 0v7" stroke="#333" strokeWidth="1.5" /></Svg></button>
        <Svg w={10} h={10} className="ml-2 mt-2 self-end"><path d="M0 8h2M4 8h2M8 8h2M4 4h2M8 4h2M8 1h2" stroke="#7d838c" strokeWidth="2" /></Svg>
      </div>
    </footer>
  );
}

const WIN_BUTTON = "rounded-[3px] border border-[#7b7f85] bg-linear-to-b from-[#f3f3f3] via-[#ebebeb] to-[#cfcfcf] shadow-[inset_0_0_0_1px_#fafafa]";

function ConnectDialog() {
  const [template, setTemplate] = useState("C:\\tmp\\simple_PHYcon.xlt");
  return (
    <div
      role="dialog"
      aria-label="PHYNIX.connect"
      className="absolute left-[123px] top-[479px] flex w-[485px] flex-col rounded-t-[6px] border border-[#1d2833] bg-linear-to-b from-[#93b0d2] via-[#b7d0ea] to-[#b5d3e8] px-[7px] pb-[6px] font-[Lato,sans-serif] text-[#222]"
    >
      <div className="-mx-[7px] flex h-[26px] items-center rounded-t-[5px] bg-linear-to-b from-[#9db7d8] to-[#a9c2df] px-[9px] pt-1">
        <Svg w={13} h={13}>
          <circle cx="6.5" cy="6.5" r="6" fill="#1b87a6" />
          <path d="M2 5l3 1 1 4 1-4 4-3M7 10l2-4 3 0M3 3l3 2 1-3" stroke="#bfe6ee" />
        </Svg>
        <h2 className="ml-[5px] font-['Open_Sans',sans-serif] text-[11px] leading-4 text-[#1b1f2a]">PHYNIX.connect</h2>
        <button aria-label="Schließen" className="ml-auto flex h-4 w-[29px] items-center justify-center rounded-[2px] border border-[#5f2a24] bg-linear-to-b from-[#e3a398] via-[#cf4a3c] to-[#c9503f]">
          <Svg w={10} h={8}><path d="M1.5 1l7 6M8.5 1l-7 6" stroke="#5a5f66" strokeWidth="3" /><path d="M1.5 1l7 6M8.5 1l-7 6" stroke="#fff" strokeWidth="2" /></Svg>
        </button>
      </div>

      <div className="relative bg-white pb-[29px]">
        <svg className="absolute inset-0 h-full w-full" viewBox="0 0 469 377" preserveAspectRatio="none">
          <path d="M0 0H283C235 12 160 22 110 27 60 32 28 40 0 56z" fill="#7fb3c1" />
          <path d="M217 377C310 359 390 338 407 327 430 318 452 303 469 290V377z" fill="#7fc3d3" />
          <path d="M391 377C425 360 452 338 469 318V377z" fill="#007f9f" />
        </svg>

        <div className="relative flex items-start">
          <button className="h-[19px] w-[30px] border-b-2 border-[#a7a7a7] bg-[#efefef] font-['Open_Sans',sans-serif] text-[11px] leading-4">File</button>
          <button aria-label="Aktualisieren" className={`ml-auto mt-[9px] flex h-[21px] w-[21px] items-center justify-center ${WIN_BUTTON}`}>
            <Svg w={15} h={14}>
              <path d="M6 1C3 2 3 5 4 8M9 13c3-1 3-4 2-7" stroke="#111" strokeWidth="2.5" />
              <path d="M0 6l4.5 5L8 5.5zM15 8l-4.5-5L7 8.5z" fill="#111" />
            </Svg>
          </button>
          <span className={`relative ml-3.5 mr-[6px] mt-[9px] flex h-5 w-[81px] items-center ${WIN_BUTTON}`}>
            <select aria-label="Port" className="ml-[3px] h-3.5 w-[58px] appearance-none border border-dotted border-[#555] bg-transparent text-xs leading-3 outline-none">
              <option>COM1</option>
            </select>
            <Svg w={7} h={4} className="pointer-events-none absolute right-1"><path d="M0 0h7L3.5 4z" fill="#111" /></Svg>
          </span>
        </div>

        <div className="relative pl-[54px] pr-[61px]">
          <div className="mt-[35px] flex items-start justify-between pr-3">
            <label htmlFor="template" className="pl-[5px] text-[13px] leading-4">Choose Excel Template:</label>
            <button aria-label="Vorlage öffnen" className={`flex h-[22px] w-7 items-center justify-center ${WIN_BUTTON}`}>
              <Svg w={18} h={14}><path d="M3 1h5l1 2h7v3H3z" fill="#5a93de" /><path d="M1 6h16l-1.5 7h-13z" fill="#86b5f2" /><path d="M3 12h12" stroke="#4a84d2" /></Svg>
            </button>
          </div>
          <div className="pr-2">
            <input
              id="template"
              value={template}
              onChange={(e) => setTemplate(e.target.value)}
              className="mt-1 block h-5 w-full border border-[#e2e3e6] border-t-[#a9abb2] bg-white px-1 text-[13px] leading-4 outline-none"
            />
          </div>

          <div className="mt-[47px] flex h-[139px] border border-[#e2e3e6] border-t-[#a9abb2] bg-white pb-px pr-px">
            <textarea
              aria-label="Protokoll"
              readOnly
              value={LOG}
              className="h-full min-w-0 flex-1 resize-none overflow-hidden whitespace-pre px-1 text-xs leading-[14px] outline-none"
            />
            <div className="flex w-4 flex-col items-center bg-[#ececec]">
              <button aria-label="Nach oben" className="flex h-4 items-center"><Caret className="rotate-180" /></button>
              <button aria-label="Bildlauf" className="mt-auto flex h-[26px] w-3.5 flex-col items-center justify-center gap-px rounded-xs border border-[#8e8e8e] bg-linear-to-r from-white to-[#cfcfcf]">
                <span className="h-px w-2 bg-[#444]" />
                <span className="h-px w-2 bg-[#444]" />
                <span className="h-px w-2 bg-[#444]" />
              </button>
              <button aria-label="Nach unten" className="mt-2.5 flex h-4 items-center"><Caret /></button>
            </div>
          </div>

          <div className="mt-[26px] flex items-start justify-between">
            <button className={`h-5 w-[65px] text-xs leading-4 ${WIN_BUTTON}`}>Clear</button>
            <button className={`mt-[5px] h-5 w-[85px] text-xs leading-4 ${WIN_BUTTON}`}>Export...</button>
          </div>
        </div>
      </div>
    </div>
  );
}

export default function App() {
  return (
    <div className="relative h-screen overflow-hidden bg-[#bcd3e3] pl-0.5 font-['Open_Sans',sans-serif]">
      <div className="flex h-full flex-col rounded-lg border border-[#72777f] bg-linear-to-b from-[#eceef1] via-[#e2e5ea] to-[#e4e8ee] px-[5px] pb-[7px] pt-px">
        <TitleBar />
        <Tabs />
        <Ribbon />
        <FormulaBar />
        <div className="mt-[3px] flex min-h-0 flex-1 border-t border-[#9ea4ad]">
          <Sheet />
          <VerticalScroll />
        </div>
        <SheetTabs />
        <StatusBar />
      </div>
      <ConnectDialog />
    </div>
  );
}
